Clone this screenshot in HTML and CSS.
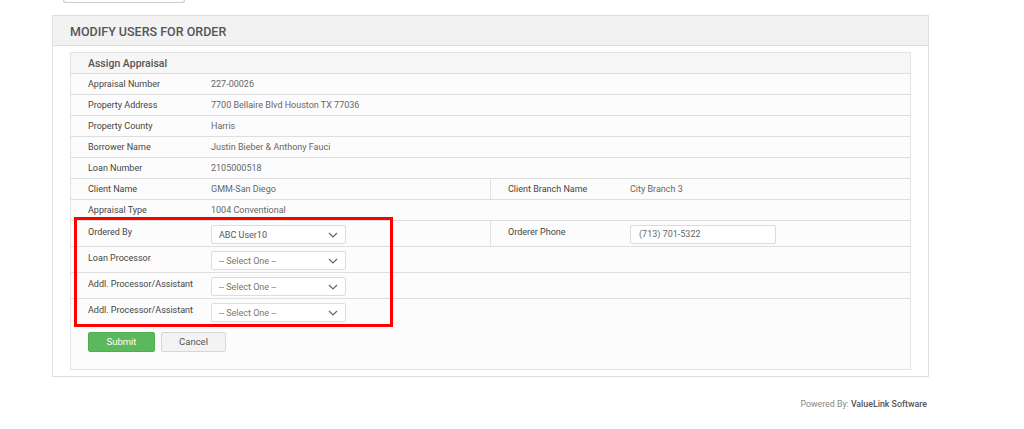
FILE: index.html
```html
<!DOCTYPE html>
<html>
<head>
<meta charset="utf-8">
<link rel="stylesheet" href="styles.css">
</head>
<body>
<div class="topbtn"></div>
<div class="panel">
  <div class="panel-head">MODIFY USERS FOR ORDER</div>
  <div class="panel-body">
    <div class="inner">
      <div class="inner-head">Assign Appraisal</div>
      <div class="row"><div class="lbl">Appraisal Number</div><div class="val">227-00026</div></div>
      <div class="row"><div class="lbl">Property Address</div><div class="val">7700 Bellaire Blvd Houston TX 77036</div></div>
      <div class="row"><div class="lbl">Property County</div><div class="val">Harris</div></div>
      <div class="row"><div class="lbl">Borrower Name</div><div class="val">Justin Bieber &amp; Anthony Fauci</div></div>
      <div class="row"><div class="lbl">Loan Number</div><div class="val">2105000518</div></div>
      <div class="row split"><div class="lbl">Client Name</div><div class="val">GMM-San Diego</div><div class="lbl lbl2">Client Branch Name</div><div class="val">City Branch 3</div></div>
      <div class="row"><div class="lbl">Appraisal Type</div><div class="val">1004 Conventional</div></div>
      <div class="frow split">
        <div class="lbl">Ordered By</div>
        <div class="fval"><div class="select"><span class="sel-text dark">ABC User10</span><svg width="10" height="6" viewBox="0 0 10 6"><path d="M1 1l4 4 4-4" fill="none" stroke="#666" stroke-width="1.2"/></svg></div></div>
        <div class="lbl lbl2">Orderer Phone</div>
        <div class="fval"><div class="input">(713) 701-5322</div></div>
      </div>
      <div class="frow">
        <div class="lbl">Loan Processor</div>
        <div class="fval"><div class="select"><span class="sel-text">-- Select One --</span><svg width="10" height="6" viewBox="0 0 10 6"><path d="M1 1l4 4 4-4" fill="none" stroke="#666" stroke-width="1.2"/></svg></div></div>
      </div>
      <div class="frow">
        <div class="lbl">Addl. Processor/Assistant</div>
        <div class="fval"><div class="select"><span class="sel-text">-- Select One --</span><svg width="10" height="6" viewBox="0 0 10 6"><path d="M1 1l4 4 4-4" fill="none" stroke="#666" stroke-width="1.2"/></svg></div></div>
      </div>
      <div class="frow last">
        <div class="lbl">Addl. Processor/Assistant</div>
        <div class="fval"><div class="select"><span class="sel-text">-- Select One --</span><svg width="10" height="6" viewBox="0 0 10 6"><path d="M1 1l4 4 4-4" fill="none" stroke="#666" stroke-width="1.2"/></svg></div></div>
      </div>
      <div class="actions">
        <button class="btn btn-submit">Submit</button>
        <button class="btn btn-cancel">Cancel</button>
      </div>
    </div>
  </div>
</div>
<div class="footer"><span class="pb">Powered By:</span> <span class="vl">ValueLink Software</span></div>
<div class="highlight"></div>
</body>
</html>
```
FILE: styles.css
```css
* { box-sizing: border-box; }
body {
  margin: 0;
  background: #fff;
  font-family: Roboto, "Liberation Sans", sans-serif;
  color: #555;
  position: relative;
  min-height: 429px;
}
.topbtn {
  margin-left: 63px;
  width: 122px;
  height: 3px;
  border: 1px solid #ccc;
  border-top: 0;
  border-radius: 0 0 3px 3px;
}
.panel {
  margin: 12px 0 0 52px;
  width: 877px;
  border: 1px solid #dedede;
  background: #fff;
}
.panel-head {
  height: 30px;
  background: #f2f2f2;
  border-bottom: 1px solid #dcdcdc;
  padding-left: 17px;
  font-size: 12.5px;
  font-weight: 500;
  line-height: 31px;
  color: #555;
}
.panel-body {
  padding: 6px 17px 6px 17px;
}
.inner {
  border: 1px solid #e2e2e2;
  background: #fcfcfc;
}
.inner-head {
  height: 21px;
  background: #f6f6f6;
  border-bottom: 1px solid #dddddd;
  padding-left: 17px;
  font-size: 10.5px;
  font-weight: 500;
  line-height: 21px;
  color: #555;
}
.row {
  display: grid;
  grid-template-columns: 140px 1fr;
  height: 21px;
  border-bottom: 1px solid #dedede;
  font-size: 9px;
  line-height: 21px;
}
.row.split, .frow.split {
  grid-template-columns: 140px 279px 140px 1fr;
}
.lbl {
  padding-left: 17px;
  color: #444;
  font-weight: 400;
}
.lbl2 {
  border-left: 1px solid #e2e2e2;
}
.val {
  color: #666;
}
.frow {
  display: grid;
  grid-template-columns: 140px 1fr;
  height: 26px;
  border-bottom: 1px solid #dedede;
  font-size: 9px;
}
.frow.last { border-bottom: 0; height: 26px; }
.frow .lbl {
  padding-top: 6px;
  line-height: 11px;
}
.fval {
  padding-top: 4px;
}
.select {
  width: 135px;
  height: 19px;
  border: 1px solid #dcdcdc;
  border-radius: 2px;
  background: #fff;
  display: flex;
  align-items: center;
  justify-content: space-between;
  padding: 0 7px 0 7px;
}
.sel-text { color: #777; font-size: 9px; }
.sel-text.dark { color: #555; }
.input {
  width: 146px;
  height: 19px;
  border: 1px solid #dcdcdc;
  border-radius: 2px;
  background: #fff;
  padding-left: 8px;
  line-height: 17px;
  color: #666;
  font-size: 9px;
}
.actions {
  display: flex;
  gap: 6px;
  padding: 7px 0 17px 17px;
}
.btn {
  height: 20px;
  border-radius: 2px;
  font-family: Roboto, "Liberation Sans", sans-serif;
  font-size: 9.5px;
  padding: 0;
  line-height: 18px;
}
.btn-submit {
  width: 67px;
  background: #5cb85c;
  border: 1px solid #52ad52;
  color: #fff;
  font-weight: 400;
}
.btn-cancel {
  width: 65px;
  background: #f3f3f3;
  border: 1px solid #d6d6d6;
  color: #555;
}
.footer {
  width: 929px;
  text-align: right;
  padding-right: 2px;
  margin-top: 22px;
  font-size: 8.8px;
}
.pb { color: #888; }
.vl { color: #555; font-weight: 500; }
.highlight {
  position: absolute;
  left: 74px;
  top: 217px;
  width: 319px;
  height: 110px;
  border: 3px solid #ff0000;
}
```
